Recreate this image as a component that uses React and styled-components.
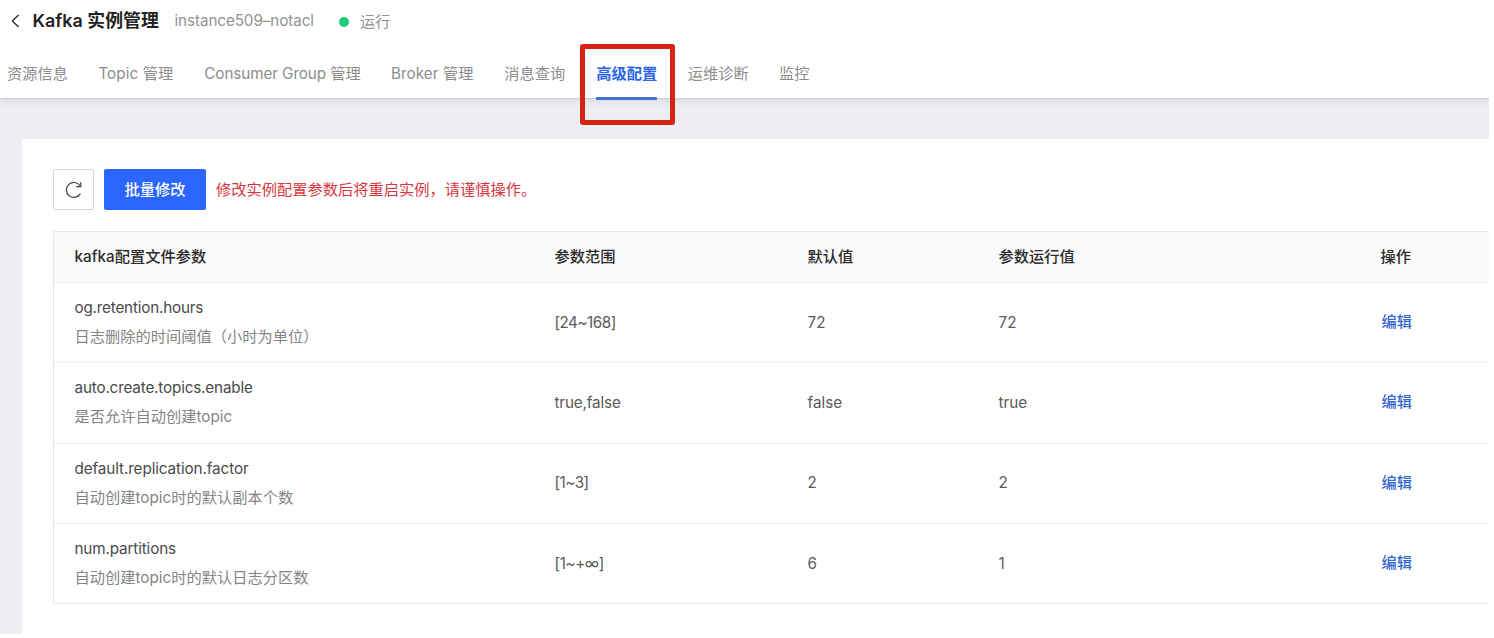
import React from "react";
import styled, { createGlobalStyle } from "styled-components";

const GlobalStyle = createGlobalStyle`
  * { box-sizing: border-box; }
  body {
    margin: 0;
    background: #fff;
    font-family: Inter, "Noto Sans CJK SC", sans-serif;
    font-size: 15.25px;
    line-height: 20px;
    color: #555;
  }
`;

const Page = styled.div`
  width: 1489px;
  height: 634px;
  display: flex;
  flex-direction: column;
  background: #edeef3;
  overflow: hidden;
`;

const Header = styled.header`
  position: relative;
  flex: none;
  height: 98px;
  background: #fff;
  box-shadow: 0 1px 1px rgba(0, 0, 0, 0.08), 0 2px 9px rgba(0, 0, 0, 0.1);
`;

const TitleBar = styled.div`
  display: flex;
  align-items: center;
  height: 41px;
  padding-left: 11px;
`;

const BackIcon = styled.svg`
  width: 9px;
  height: 14px;
  margin-right: 12.5px;
  fill: none;
  stroke: #222;
  stroke-width: 1.2;
`;

const Title = styled.h1`
  width: 142px;
  margin: 0;
  font-size: 17.9px;
  font-weight: 600;
  line-height: 40px;
  color: #222;
  white-space: nowrap;
`;

const InstanceName = styled.span`
  width: 164.5px;
  letter-spacing: -0.1px;
  color: #929292;
`;

const StatusDot = styled.i`
  width: 10px;
  height: 10px;
  margin: 2px 11px 0 0;
  border-radius: 50%;
  background: #1ecb78;
`;

const StatusText = styled.span`
  margin-top: 2px;
  color: #929292;
`;

const Tabs = styled.nav`
  display: flex;
  gap: 30.4px;
  height: 57px;
  padding-left: 7px;
`;

const Tab = styled.a`
  position: relative;
  width: ${(p) => p.$width}px;
  line-height: 66px;
  white-space: nowrap;
  letter-spacing: ${(p) => p.$spacing || 0}px;
  font-weight: ${(p) => (p.$active ? 700 : 400)};
  color: ${(p) => (p.$active ? "#2d66e8" : "#8c8c8c")};
`;

const Underline = styled.i`
  position: absolute;
  left: 0;
  right: 0;
  bottom: -2px;
  height: 3px;
  border-radius: 1px;
  background: #3a70d4;
`;

const Highlight = styled.i`
  position: absolute;
  z-index: 2;
  left: -16px;
  top: 3px;
  width: 95px;
  height: 81px;
  border: 5px solid #d62414;
  border-radius: 3px;
`;

const Panel = styled.main`
  flex: 1;
  margin: 41px 0 0 22px;
  padding: 30px 0 0 31px;
  background: #fff;
`;

const Toolbar = styled.div`
  display: flex;
  align-items: center;
  height: 41px;
  margin-bottom: 21px;
`;

const RefreshButton = styled.button`
  display: flex;
  align-items: center;
  justify-content: center;
  width: 41px;
  height: 41px;
  margin-right: 10px;
  padding: 0;
  border: 1px solid #d4d4d4;
  border-radius: 2px;
  background: #fff;

  svg {
    fill: none;
    stroke: #444;
    stroke-width: 1.2;
  }
`;

const PrimaryButton = styled.button`
  width: 102px;
  height: 41px;
  margin-right: 10px;
  padding: 0;
  border: 0;
  border-radius: 2px;
  background: #2b66ff;
  font: inherit;
  font-weight: 500;
  color: #fff;
`;

const Warning = styled.span`
  color: #d9363e;
`;

const Table = styled.div`
  border: 1px solid #e6e6e6;
  border-right: 0;
  border-radius: 2px 0 0 2px;
`;

const Row = styled.div`
  display: grid;
  grid-template-columns: 480px 253px 191px 383px 1fr;
  align-items: center;
  height: 80.3px;
  padding-left: 20.5px;
  border-top: 1px solid #f0f0f0;
`;

const HeadRow = styled(Row)`
  height: 50px;
  border-top: 0;
  background: #fafafa;
  font-weight: 500;
  color: #2b2b2b;
`;

const HeadCell = styled.span`
  margin-left: ${(p) => p.$shift || 0}px;
`;

const Param = styled.div`
  margin-bottom: 1.2px;
  white-space: nowrap;
`;

const ParamName = styled.div`
  line-height: 29px;
  color: #4a4a4a;
  letter-spacing: ${(p) => p.$spacing}px;
`;

const ParamNote = styled.div`
  line-height: 29px;
  color: #858585;
`;

const Value = styled.span`
  color: #5a5a5a;
  letter-spacing: ${(p) => p.$spacing || 0}px;
`;

const EditLink = styled.a`
  margin-bottom: 1.2px;
  font-weight: 500;
  color: #3568cf;
`;

const tabs = [
  { label: "资源信息", width: 61 },
  { label: "Topic 管理", width: 75.5, spacing: 0.08 },
  { label: "Consumer Group 管理", width: 156.3, spacing: -0.09 },
  { label: "Broker 管理", width: 83, spacing: 0.06 },
  { label: "消息查询", width: 61.5 },
  { label: "高级配置", width: 61, active: true },
  { label: "运维诊断", width: 61 },
  { label: "监控", width: 31 },
];

const rows = [
  { name: "og.retention.hours", spacing: -0.2, note: "日志删除的时间阈值（小时为单位）", range: "[24~168]", rangeSpacing: -0.5, def: "72", current: "72" },
  { name: "auto.create.topics.enable", spacing: -0.17, note: "是否允许自动创建topic", range: "true,false", rangeSpacing: -0.15, def: "false", current: "true" },
  { name: "default.replication.factor", spacing: -0.1, note: "自动创建topic时的默认副本个数", range: "[1~3]", rangeSpacing: -0.5, def: "2", current: "2" },
  { name: "num.partitions", spacing: -0.14, note: "自动创建topic时的默认日志分区数", range: "[1~+∞]", rangeSpacing: -0.4, def: "6", current: "1" },
];

export default function App() {
  return (
    <>
      <GlobalStyle />
      <Page>
        <Header>
          <TitleBar>
            <BackIcon viewBox="0 0 9 14">
              <path d="M7.6 1 1.3 7l6.3 6" />
            </BackIcon>
            <Title>Kafka 实例管理</Title>
            <InstanceName>instance509–notacl</InstanceName>
            <StatusDot />
            <StatusText>运行</StatusText>
          </TitleBar>
          <Tabs>
            {tabs.map((t) => (
              <Tab key={t.label} $width={t.width} $spacing={t.spacing} $active={t.active}>
                {t.label}
                {t.active && <Underline />}
                {t.active && <Highlight />}
              </Tab>
            ))}
          </Tabs>
        </Header>
        <Panel>
          <Toolbar>
            <RefreshButton aria-label="刷新">
              <svg width="18" height="18" viewBox="0 0 18 18">
                <path d="M15.4 12.6A7.5 7.5 0 1 1 15.2 4.9" />
                <path d="M15.8 1.2V5.6H11.2" />
              </svg>
            </RefreshButton>
            <PrimaryButton>批量修改</PrimaryButton>
            <Warning>修改实例配置参数后将重启实例，请谨慎操作。</Warning>
          </Toolbar>
          <Table>
            <HeadRow>
              <HeadCell>kafka配置文件参数</HeadCell>
              <HeadCell>参数范围</HeadCell>
              <HeadCell>默认值</HeadCell>
              <HeadCell>参数运行值</HeadCell>
              <HeadCell $shift={-1}>操作</HeadCell>
            </HeadRow>
            {rows.map((r) => (
              <Row key={r.name}>
                <Param>
                  <ParamName $spacing={r.spacing}>{r.name}</ParamName>
                  <ParamNote>{r.note}</ParamNote>
                </Param>
                <Value $spacing={r.rangeSpacing}>{r.range}</Value>
                <Value>{r.def}</Value>
                <Value>{r.current}</Value>
                <EditLink>编辑</EditLink>
              </Row>
            ))}
          </Table>
        </Panel>
      </Page>
    </>
  );
}
